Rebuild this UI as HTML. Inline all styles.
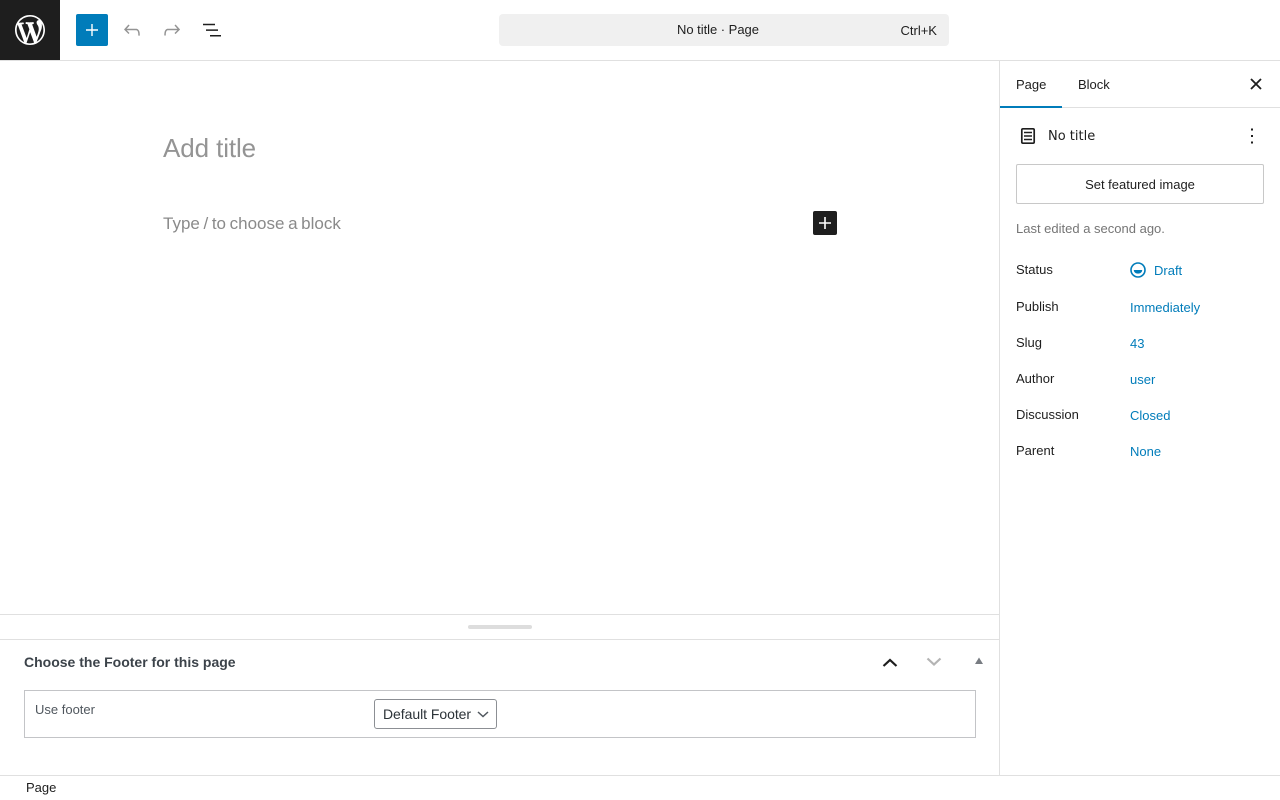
<!DOCTYPE html>
<html><head><meta charset="utf-8"><style>
html,body{margin:0;padding:0;width:1280px;height:800px;overflow:hidden;background:#fff;font-family:"Liberation Sans",sans-serif;font-size:13px;color:#1e1e1e}
.a{position:absolute;white-space:nowrap;line-height:16px}
.l{position:absolute;background:#e0e0e0}
.b{color:#007cba}
svg{position:absolute;display:block}
</style></head><body>
<div class="l" style="left:0;top:60px;width:1280px;height:1px"></div>
<div class="l" style="left:999px;top:60px;width:1px;height:716px"></div>
<div class="l" style="left:0;top:775px;width:1280px;height:1px"></div>
<div class="a" style="left:0;top:0;width:60px;height:60px;background:#1e1e1e"></div>
<svg style="left:12px;top:12px" width="36" height="36" viewBox="-2 -2 24 24" fill="#fff"><path d="M20 10c0-5.51-4.49-10-10-10C4.480 0 0 4.490 0 10c0 5.520 4.480 10 10 10 5.510 0 10-4.480 10-10zM7.780 15.370L4.370 6.220c.55-.02 1.170-.08 1.170-.08.5-.06.44-1.130-.06-1.110 0 0-1.450.11-2.370.11-.18 0-.37 0-.58-.01C4.120 2.690 6.890 1.050 10 1.050c2.320 0 4.430.87 6.030 2.340-.68-.11-1.650.39-1.650 1.580 0 .74.45 1.360.9 2.100.35.61.55 1.360.55 2.460 0 1.490-1.400 5-1.400 5l-3.030-8.370c.54-.02.82-.17.82-.17.5-.05.44-1.250-.06-1.220 0 0-1.440.12-2.380.12-.87 0-2.330-.12-2.330-.12-.5-.03-.56 1.200-.06 1.220l.92.08 1.260 3.410zM17.410 10c.24-.64.740-1.870.430-4.250.7 1.290 1.050 2.710 1.050 4.250 0 3.290-1.730 6.240-4.400 7.780.97-2.590 1.940-5.200 2.920-7.780zM6.100 18.090C3.120 16.650 1.110 13.530 1.110 10c0-1.300.23-2.480.72-3.590C3.250 10.300 4.670 14.200 6.100 18.090zm4.030-6.630l2.580 6.980c-.86.29-1.760.45-2.710.45-.79 0-1.570-.11-2.290-.33.81-2.380 1.620-4.740 2.420-7.100z"/></svg>
<div class="a" style="left:76px;top:14px;width:32px;height:32px;background:#007cba;border-radius:2px"></div>
<svg style="left:80px;top:18px" width="24" height="24" viewBox="0 0 24 24" fill="#fff"><path d="M18 11.300h-5.300V6h-1.400v5.300H6v1.400h5.300V18h1.400v-5.300H18z"/></svg>
<svg style="left:120px;top:18px" width="24" height="24" viewBox="0 0 24 24" fill="#949494"><path d="M18.300 11.700c-.6-.6-1.400-.9-2.300-.9H6.700l2.900-3.300-1.100-1-4.500 5L8.500 16l1-1-2.700-2.700H16c.5 0 .9.200 1.300.5 1 1 1 3.400 1 4.500v.3h1.500v-.2c0-1.500 0-4.300-1.500-5.700z"/></svg>
<svg style="left:160px;top:18px" width="24" height="24" viewBox="0 0 24 24" fill="#949494"><path d="M15.600 6.500l-1.100 1 2.900 3.300H8c-.9 0-1.700.3-2.300.9-1.400 1.500-1.400 4.200-1.400 5.600v.2h1.500v-.3c0-1.100 0-3.500 1-4.500.3-.3.700-.5 1.300-.5h9.200L14.500 15l1 1.100 4.600-4.600-4.500-5z"/></svg>
<svg style="left:200px;top:18px" width="24" height="24" viewBox="0 0 24 24" fill="#1e1e1e"><path d="M3 5.500h12V7H3zM6 11.200h12v1.500H6zM10 16.800h11v1.500H10z" transform="translate(0 .2)"/></svg>
<div class="a" style="left:499px;top:14px;width:450px;height:32px;background:#f0f0f0;border-radius:4px"></div>
<div class="a" style="left:677px;top:22px;color:#1e1e1e;letter-spacing:-.03px">No title · Page</div>
<div class="a" style="left:900.500px;top:23px;color:#1e1e1e">Ctrl+K</div>
<div class="a" style="left:163px;top:129px;font-size:26px;line-height:38px;color:#949494;letter-spacing:-.1px">Add title</div>
<div class="a" style="left:163px;top:212px;font-size:17px;line-height:24px;color:#8a8a8a;word-spacing:-1.100px">Type / to choose a block</div>
<div class="a" style="left:813px;top:211px;width:24px;height:24px;background:#1e1e1e;border-radius:2px"></div>
<svg style="left:813px;top:211px" width="24" height="24" viewBox="0 0 24 24" fill="#fff"><path d="M18 11.200h-5.200V6h-1.600v5.200H6v1.600h5.200V18h1.600v-5.200H18z"/></svg>
<div class="l" style="left:0;top:614px;width:999px;height:1px"></div>
<div class="l" style="left:0;top:639px;width:999px;height:1px"></div>
<div class="a" style="left:468px;top:625px;width:64px;height:4px;background:#ddd;border-radius:2px"></div>
<div class="a" style="left:24px;top:654px;font-size:14px;font-weight:bold;color:#3c434a">Choose the Footer for this page</div>
<svg style="left:878px;top:650px" width="24" height="24" viewBox="0 0 24 24" fill="none" stroke="#1e1e1e" stroke-width="2.200"><path d="M5.500 16l6.500-6 6.500 6"/></svg>
<svg style="left:922px;top:650px" width="24" height="24" viewBox="0 0 24 24" fill="none" stroke="#b4b4b4" stroke-width="2.200"><path d="M5.500 8.500l6.500 6 6.500-6"/></svg>
<svg style="left:974px;top:656px" width="10" height="10" viewBox="0 0 10 10" fill="#787c82"><path d="M5 1.500L9 8H1z"/></svg>
<div class="a" style="left:24px;top:690px;width:950px;height:46px;border:1px solid #c3c4c7"></div>
<div class="a" style="left:35px;top:702px;color:#50575e">Use footer</div>
<div class="a" style="left:374px;top:699px;width:121px;height:28px;border:1px solid #8c8f94;border-radius:3px"></div>
<div class="a" style="left:383px;top:706px;font-size:14px;color:#2c3338;letter-spacing:-.05px">Default Footer</div>
<svg style="left:476px;top:708px" width="14" height="14" viewBox="0 0 14 14" fill="none" stroke="#50575e" stroke-width="1.500"><path d="M2 4l5 4.500L12 4"/></svg>
<div class="a" style="left:26px;top:780px;color:#1e1e1e">Page</div>
<div class="l" style="left:1000px;top:107px;width:280px;height:1px"></div>
<div class="a" style="left:1000px;top:106px;width:62px;height:2px;background:#007cba"></div>
<div class="a" style="left:1016px;top:77px">Page</div>
<div class="a" style="left:1078px;top:77px">Block</div>
<svg style="left:1244px;top:72px" width="24" height="24" viewBox="0 0 24 24" fill="none" stroke="#1e1e1e" stroke-width="1.800"><path d="M7 7l10 10M17 7L7 17"/></svg>
<svg style="left:1016px;top:124px" width="24" height="24" viewBox="0 0 24 24" fill="none" stroke="#1e1e1e"><rect x="5.800" y="4.800" width="12.400" height="14.400" rx="1.200" stroke-width="1.700"/><path d="M8 8.500h8M8 12h8M8 15.500h8" stroke-width="1.600"/></svg>
<div class="a" style="left:1048px;top:129px;font-family:'DejaVu Sans',sans-serif;color:#1e1e1e;line-height:15px">No title</div>
<svg style="left:1240px;top:124px" width="24" height="24" viewBox="0 0 24 24" fill="#1e1e1e"><path d="M11 4.500h2v2h-2zM11 11h2v2h-2zM11 17.500h2v2h-2z"/></svg>
<div class="a" style="left:1016px;top:164px;width:246px;height:38px;border:1px solid #c8c8c8;border-radius:2px;text-align:center;line-height:39px">Set featured image</div>
<div class="a" style="left:1016px;top:221px;color:#757575">Last edited a second ago.</div>
<div class="a" style="left:1016px;top:262px">Status</div>
<svg style="left:1130px;top:262px" width="16" height="16" viewBox="0 0 16 16"><circle cx="8" cy="8" r="7" fill="none" stroke="#007cba" stroke-width="1.600"/><path d="M3.800 8h8.400c0 2.300-1.900 3.600-4.200 3.600S3.800 10.300 3.800 8z" fill="#007cba"/></svg>
<div class="a b" style="left:1154px;top:263px">Draft</div>
<div class="a" style="left:1016px;top:299px">Publish</div>
<div class="a b" style="left:1130px;top:300px">Immediately</div>
<div class="a" style="left:1016px;top:335px">Slug</div>
<div class="a b" style="left:1130px;top:336px">43</div>
<div class="a" style="left:1016px;top:371px">Author</div>
<div class="a b" style="left:1130px;top:372px">user</div>
<div class="a" style="left:1016px;top:407px">Discussion</div>
<div class="a b" style="left:1130px;top:408px">Closed</div>
<div class="a" style="left:1016px;top:443px">Parent</div>
<div class="a b" style="left:1130px;top:444px">None</div>
</body></html>
